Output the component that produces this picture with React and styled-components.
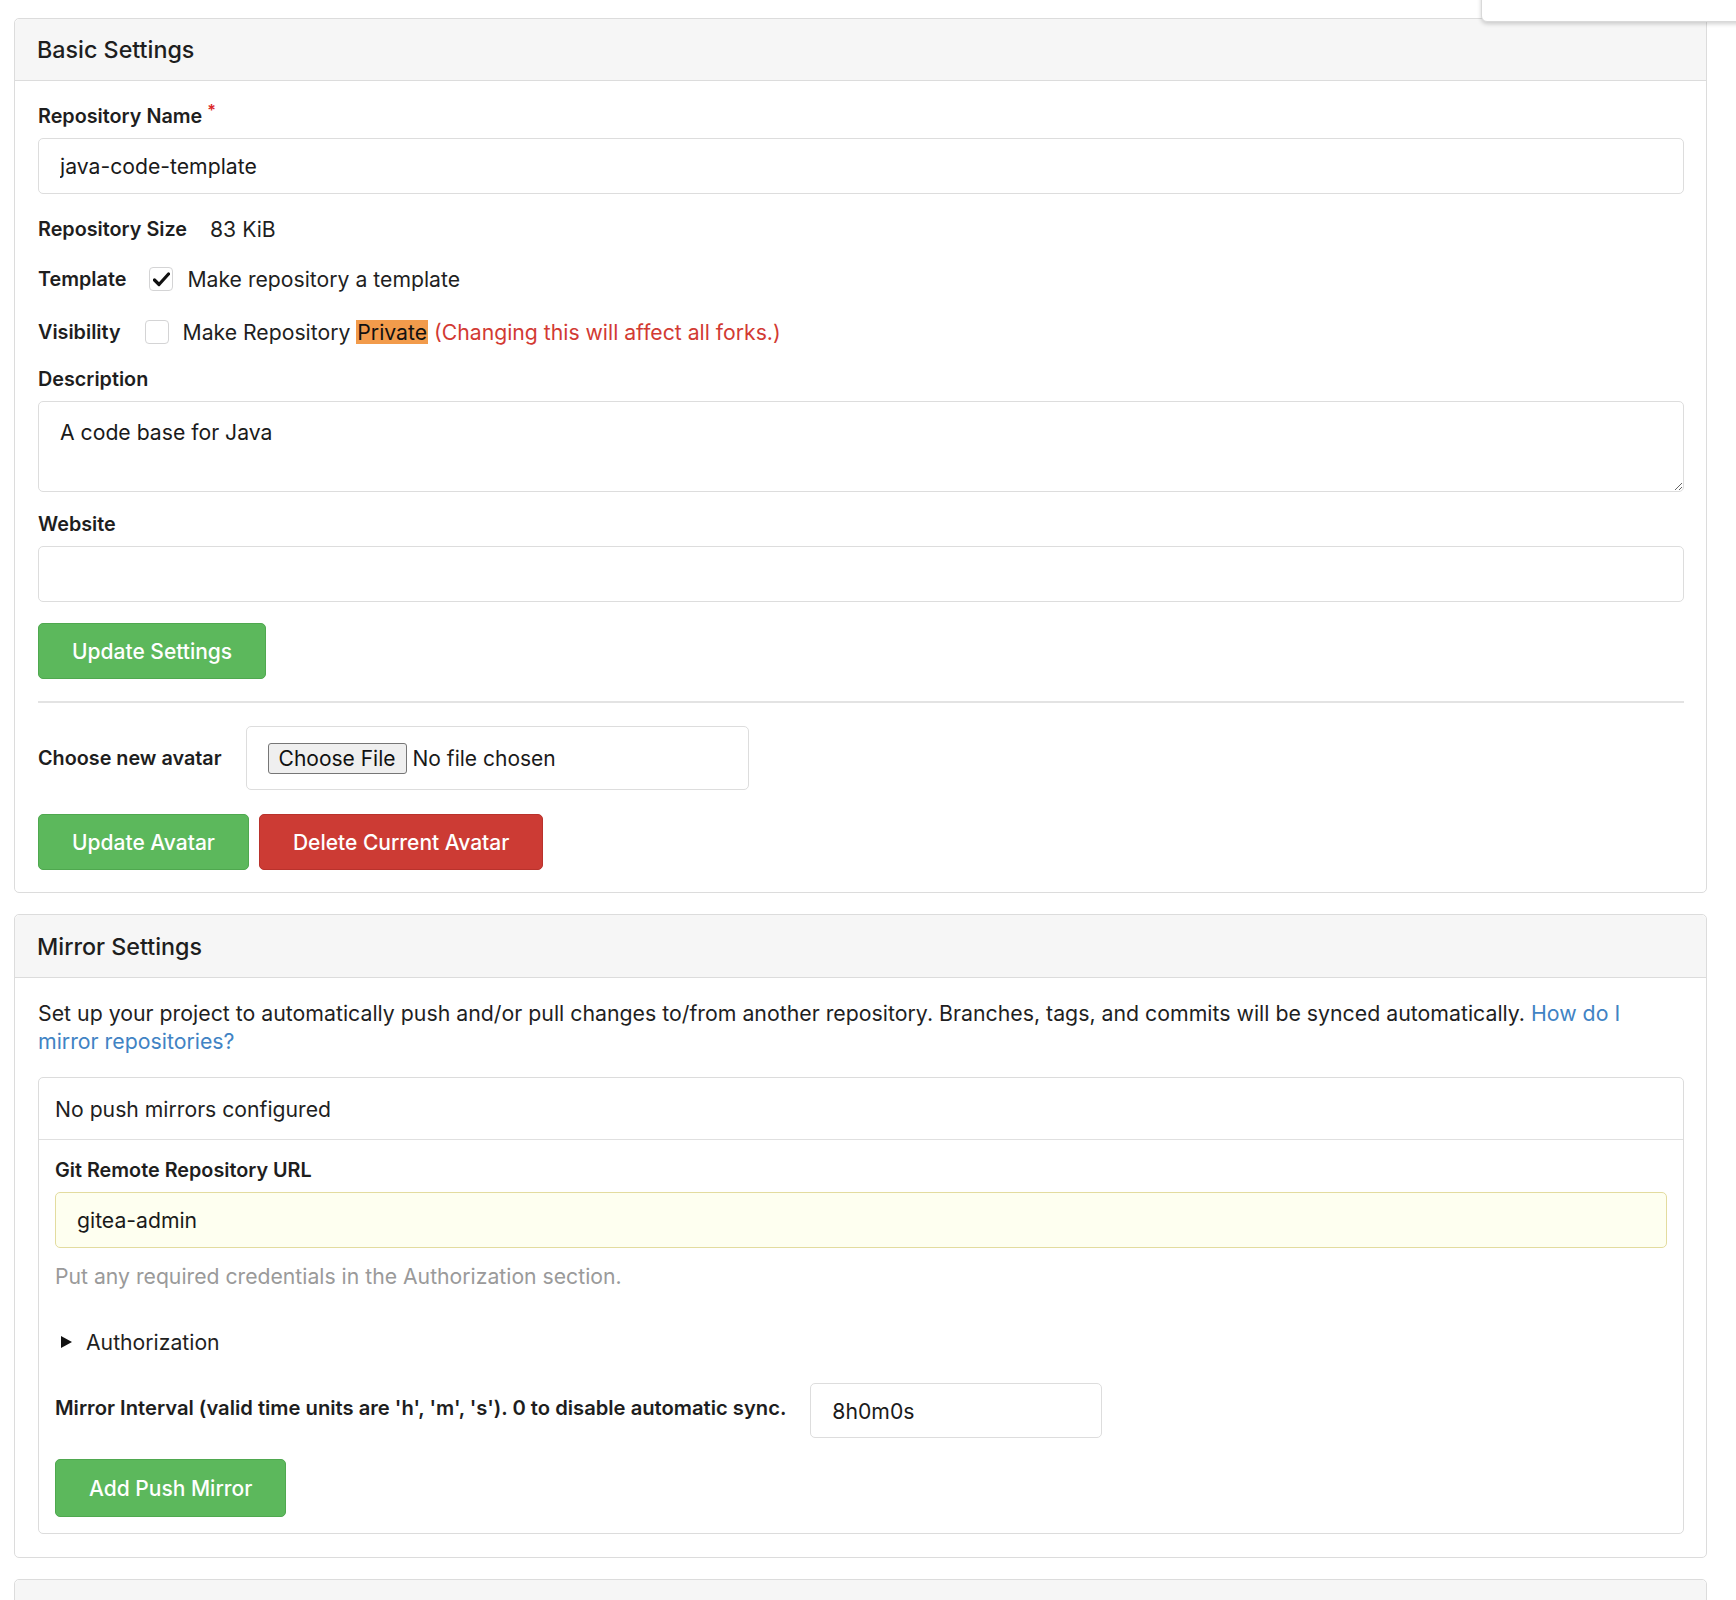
import React from "react";
import styled, { createGlobalStyle } from "styled-components";

const GlobalStyle = createGlobalStyle`
  html, body {
    margin: 0;
    padding: 0;
    background: #fff;
  }
  body {
    font-family: Inter, "Noto Sans", "Liberation Sans", sans-serif;
    font-size: 21.2px;
    color: #1f1f1f;
  }
  * { box-sizing: border-box; }
`;

const Page = styled.div`
  position: relative;
  width: 1736px;
  padding: 18px 29px 0 14px;
  display: flex;
  flex-direction: column;
  gap: 21px;
`;

const TopMenu = styled.div`
  position: absolute;
  top: -20px;
  right: -10px;
  width: 265px;
  height: 42px;
  background: #fff;
  border: 1px solid #d9d9d9;
  border-radius: 6px;
  box-shadow: 0 2px 4px rgba(0, 0, 0, 0.18);
  z-index: 5;
`;

const Card = styled.section`
  border: 1px solid #dcdcdc;
  border-radius: 5px;
  background: #fff;
`;

const CardHeader = styled.h4`
  margin: 0;
  height: ${p => p.$h || 62}px;
  display: flex;
  align-items: center;
  padding: 0 22px;
  background: #f6f6f6;
  border-bottom: 1px solid #dcdcdc;
  border-radius: 5px 5px 0 0;
  font-size: 23.3px;
  font-weight: 500;
  color: #1e1e1e;
`;

const CardBody = styled.div`
  padding: ${p => p.$pad || "24px 22px 22px 23px"};
`;

const Field = styled.div`
  margin-bottom: ${p => p.$mb ?? 22}px;
`;

const Label = styled.label`
  display: block;
  height: 22px;
  line-height: 22px;
  margin-bottom: 11px;
  font-size: 19.8px;
  font-weight: 600;
  color: #1e1e1e;
`;

const Required = styled.span`
  color: #db2828;
  font-size: 16px;
  margin-left: 5px;
  position: relative;
  top: -7px;
`;

const TextInput = styled.input`
  display: block;
  width: 100%;
  height: ${p => p.$h || 56}px;
  padding: 0 21px;
  border: 1px solid ${p => (p.$autofill ? "#e3dc9f" : "#dddddd")};
  border-radius: 5px;
  background: ${p => (p.$autofill ? "#fefff0" : "#fff")};
  font-family: inherit;
  font-size: 21.2px;
  color: #1a1a1a;
  outline: none;
`;

const TextArea = styled.textarea`
  display: block;
  width: 100%;
  height: 91px;
  padding: 17px 21px;
  border: 1px solid #dddddd;
  border-radius: 5px;
  font-family: inherit;
  font-size: 21.2px;
  line-height: 26px;
  color: #1a1a1a;
  resize: vertical;
  outline: none;
`;

const InlineRow = styled.div`
  display: flex;
  align-items: center;
  height: 26px;
  margin-bottom: ${p => p.$mb ?? 24}px;
`;

const InlineLabel = styled.span`
  font-size: ${p => p.$size || 19.8}px;
  font-weight: 600;
  margin-right: ${p => p.$gap || 23}px;
  padding-bottom: ${p => p.$lift || 0}px;
  color: #1e1e1e;
`;

const Value = styled.span`
  font-size: 21.2px;
`;

const CheckBox = styled.span`
  width: 24px;
  height: 24px;
  margin-right: 14px;
  border: 1px solid #d4d4d5;
  border-radius: 4px;
  background: #fff;
  display: inline-flex;
  align-items: center;
  justify-content: center;
  flex-shrink: 0;
`;

const Highlight = styled.span`
  background: #f29b4b;
  color: #111;
  padding: 0 1px;
  line-height: 24px;
  display: inline-block;
`;

const Warn = styled.span`
  color: #d23a33;
`;

const Button = styled.button`
  height: ${p => p.$h || 56}px;
  padding: 0 33px;
  border: 1px solid ${p => (p.$red ? "#b9322c" : "#4fa84f")};
  border-radius: 5px;
  background: ${p => (p.$red ? "#cc3b34" : "#5cb85c")};
  color: #fff;
  font-family: inherit;
  font-size: 21px;
  font-weight: 500;
  cursor: pointer;
`;

const Divider = styled.hr`
  margin: 22px 0 23px;
  border: 0;
  border-top: 2px solid #e3e3e3;
`;

const AvatarRow = styled.div`
  display: flex;
  align-items: center;
  margin-bottom: 24px;
`;

const FileBox = styled.div`
  width: 503px;
  height: 64px;
  padding: 0 21px;
  display: flex;
  align-items: center;
  border: 1px solid #dddddd;
  border-radius: 5px;
`;

const FileInput = styled.input`
  font-family: inherit;
  font-size: 21px;
  color: #1a1a1a;

  &::file-selector-button {
    font-family: inherit;
    font-size: 21px;
    height: 31px;
    padding: 0 10px;
    margin-right: 6px;
    border: 1px solid #767676;
    border-radius: 3px;
    background: #efefef;
    color: #111;
  }
`;

const ButtonRow = styled.div`
  display: flex;
  gap: 10px;
`;

const Paragraph = styled.p`
  margin: 0 0 22px;
  padding-right: 10px;
  font-size: 21.3px;
  line-height: 28px;
`;

const Link = styled.a`
  color: #4183c4;
  text-decoration: none;
`;

const InnerBox = styled.div`
  border: 1px solid #dcdcdc;
  border-radius: 5px;
`;

const InnerSegment = styled.div`
  padding: ${p => p.$pad};
  border-top: ${p => (p.$first ? "none" : "1px solid #e0e0e0")};
`;

const HelpText = styled.div`
  margin-top: 16px;
  font-size: 21.2px;
  line-height: 24px;
  color: #9a9a9a;
`;

const Details = styled.details`
  margin: 42px 0 29px;
  font-size: 21.2px;
`;

const Summary = styled.summary`
  display: flex;
  align-items: center;
  line-height: 24px;
  list-style: none;
  cursor: pointer;

  &::-webkit-details-marker {
    display: none;
  }
`;

const Caret = styled.span`
  width: 0;
  height: 0;
  margin: 0 14px 0 6px;
  border-top: 6px solid transparent;
  border-bottom: 6px solid transparent;
  border-left: 11px solid #111;
`;

const IntervalRow = styled.div`
  display: flex;
  align-items: center;
  margin-bottom: 21px;
`;

const IntervalInput = styled(TextInput)`
  width: 292px;
  height: 55px;
`;

function CheckMark() {
  return (
    <svg width="17" height="15" viewBox="0 0 17 15">
      <path d="M1.5 8 L6 12.5 L15.5 2" fill="none" stroke="#111" strokeWidth="3.2" strokeLinecap="round" strokeLinejoin="round" />
    </svg>
  );
}

export default function App() {
  return (
    <>
      <GlobalStyle />
      <Page>
        <TopMenu />
        <Card>
          <CardHeader>Basic Settings</CardHeader>
          <CardBody>
            <Field>
              <Label>
                Repository Name<Required>*</Required>
              </Label>
              <TextInput defaultValue="java-code-template" />
            </Field>
            <InlineRow>
              <InlineLabel>Repository Size</InlineLabel>
              <Value>83 KiB</Value>
            </InlineRow>
            <InlineRow $mb={27}>
              <InlineLabel>Template</InlineLabel>
              <CheckBox>
                <CheckMark />
              </CheckBox>
              <Value>Make repository a template</Value>
            </InlineRow>
            <InlineRow $mb={23}>
              <InlineLabel $gap={24}>Visibility</InlineLabel>
              <CheckBox />
              <Value>
                Make Repository <Highlight>Private</Highlight>{" "}
                <Warn>(Changing this will affect all forks.)</Warn>
              </Value>
            </InlineRow>
            <Field $mb={21}>
              <Label>Description</Label>
              <TextArea defaultValue="A code base for Java" />
            </Field>
            <Field $mb={21}>
              <Label>Website</Label>
              <TextInput defaultValue="" />
            </Field>
            <Button>Update Settings</Button>
            <Divider />
            <AvatarRow>
              <InlineLabel $gap={24}>Choose new avatar</InlineLabel>
              <FileBox>
                <FileInput type="file" />
              </FileBox>
            </AvatarRow>
            <ButtonRow>
              <Button>Update Avatar</Button>
              <Button $red>Delete Current Avatar</Button>
            </ButtonRow>
          </CardBody>
        </Card>

        <Card>
          <CardHeader $h={63}>Mirror Settings</CardHeader>
          <CardBody $pad="21px 22px 23px 23px">
            <Paragraph>
              Set up your project to automatically push and/or pull changes to/from another
              repository. Branches, tags, and commits will be synced automatically.{" "}
              <Link href="#">How do I mirror repositories?</Link>
            </Paragraph>
            <InnerBox>
              <InnerSegment $first $pad="18px 16px 17px">
                <Value>No push mirrors configured</Value>
              </InnerSegment>
              <InnerSegment $pad="19px 16px 16px">
                <Label>Git Remote Repository URL</Label>
                <TextInput $autofill defaultValue="gitea-admin" />
                <HelpText>Put any required credentials in the Authorization section.</HelpText>
                <Details>
                  <Summary>
                    <Caret />
                    Authorization
                  </Summary>
                </Details>
                <IntervalRow>
                  <InlineLabel $gap={24} $size={20.2} $lift={6}>
                    Mirror Interval (valid time units are 'h', 'm', 's'). 0 to disable automatic sync.
                  </InlineLabel>
                  <IntervalInput defaultValue="8h0m0s" />
                </IntervalRow>
                <Button $h={58}>Add Push Mirror</Button>
              </InnerSegment>
            </InnerBox>
          </CardBody>
        </Card>

        <Card>
          <CardHeader />
          <CardBody />
        </Card>
      </Page>
    </>
  );
}
